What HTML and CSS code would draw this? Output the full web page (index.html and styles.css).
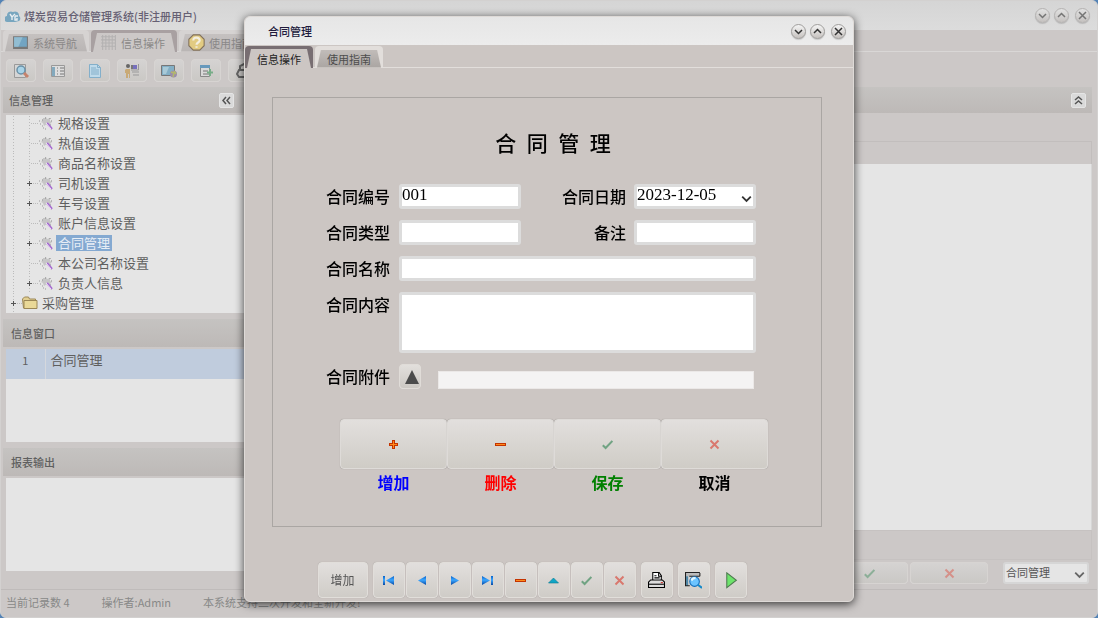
FILE: index.html
```html
<!DOCTYPE html>
<html lang="zh-CN">
<head>
    <meta charset="UTF-8">
    <meta name="viewport" content="width=device-width, initial-scale=1.0">
    <title>煤炭贸易仓储管理系统</title>
    <link rel="stylesheet" href="styles.css">
</head>
<body>
    <!-- Shared icons -->
    <svg class="sprite" aria-hidden="true">
        <defs>
            <linearGradient id="blue" x1="0" y1="0" x2="0" y2="1">
                <stop offset="0" stop-color="#0a62c8"/>
                <stop offset="0.45" stop-color="#3aa6ff"/>
                <stop offset="1" stop-color="#0848a4"/>
            </linearGradient>
            <symbol id="i-down" viewBox="0 0 9 9"><path d="M1 3l3.500 3.500L8 3" fill="none" stroke="currentColor" stroke-width="1.500"/></symbol>
            <symbol id="i-up" viewBox="0 0 9 9"><path d="M1 6l3.500-3.500L8 6" fill="none" stroke="currentColor" stroke-width="1.500"/></symbol>
            <symbol id="i-close" viewBox="0 0 9 9"><path d="M1 1l7 7M8 1l-7 7" fill="none" stroke="currentColor" stroke-width="1.500"/></symbol>
            <symbol id="i-plus" viewBox="0 0 11 11"><path d="M5.500 1v9M1 5.500h9" stroke="#c43400" stroke-width="3"/><path d="M5.500 2v7M2 5.500h7" stroke="#ff8a1c"/></symbol>
            <symbol id="i-minus" viewBox="0 0 11 11"><path d="M0 5.500h11" stroke="#c43400" stroke-width="3"/><path d="M1 5.500h9" stroke="#ff8a1c"/></symbol>
            <symbol id="i-check" viewBox="0 0 11 11"><path d="M.8 6.200l2.800 2.800 6.800-7" fill="none" stroke="#71a383" stroke-width="2"/></symbol>
            <symbol id="i-cross" viewBox="0 0 11 11"><path d="M1.500 1.500l8 8M9.500 1.500l-8 8" fill="none" stroke="#d9786e" stroke-width="2"/></symbol>
            <symbol id="i-first" viewBox="0 0 11 11"><path d="M0 1h2v9H0zM11 1v9L3 5.500z" fill="url(#blue)"/></symbol>
            <symbol id="i-prev" viewBox="0 0 11 11"><path d="M10 1v9L2 5.500z" fill="url(#blue)"/></symbol>
            <symbol id="i-next" viewBox="0 0 11 11"><path d="M2 1v9l8-4.500z" fill="url(#blue)"/></symbol>
            <symbol id="i-last" viewBox="0 0 11 11"><path d="M9 1h2v9H9zM0 1v9l8-4.500z" fill="url(#blue)"/></symbol>
            <symbol id="i-edit" viewBox="0 0 11 11"><path d="M.5 8h10L5.500 3z" fill="#10a5c6" stroke="#067890" stroke-width=".6"/></symbol>
            <symbol id="i-wand" viewBox="0 0 16 16">
                <path d="M5 3h2l1-1 1 2 3-1v3l2 1-2 2v2l-3-2-3 2-1-3-2-1 2-2z" fill="#c6c6c6"/>
                <path d="M7 3h1M12 3v1M13 6h1M12 10h1M4 5h1" stroke="#858585"/>
                <path d="M1 6h1M2 9h1M4 11h1M5 13h1M7 14h1" stroke="#999"/>
                <path d="M9 8l5 6" stroke="#a56ad0" stroke-width="2"/>
                <path d="M8 8l5 6" stroke="#eee3f6"/>
            </symbol>
        </defs>
    </svg>

    <div class="app">
        <header class="titlebar">
            <svg class="logo" viewBox="0 0 16 14"><path d="M3 13a3 3 0 0 1-1-6 4 4 0 0 1 6-4 4 4 0 0 1 6 4 3 3 0 0 1 0 5l-4 1z" fill="#78a6bf"/><path d="M5 5l2 3v3M10 5l-3 3M10 7h3M10 7v4h2V9" fill="none" stroke="#e8eef2" stroke-width="1.400"/></svg>
            <h1>煤炭贸易仓储管理系统(非注册用户)</h1>
            <div class="window-buttons">
                <button aria-label="最小化"><svg><use href="#i-down"/></svg></button>
                <button aria-label="最大化"><svg><use href="#i-up"/></svg></button>
                <button aria-label="关闭" class="close"><svg><use href="#i-close"/></svg></button>
            </div>
        </header>

        <nav class="tabs">
            <button class="tab"><span><svg viewBox="0 0 16 16"><path d="M1 2h14v12H1z" fill="#777"/><path d="M2 3h12v9H2z" fill="#72a4c2"/><path d="M2 3h8l-4 9H2z" fill="#92bdd2"/></svg>系统导航</span></button>
            <button class="tab active"><span><svg viewBox="0 0 16 16"><path d="M2.500 1v14M5.500 1v14M8.500 1v14M11.500 1v14M14.500 1v14M1 2.500h14M1 5.500h14M1 8.500h14M1 11.500h14" stroke="#b4b2b2"/></svg>信息操作</span></button>
            <button class="tab"><span><svg viewBox="0 0 16 16"><path d="M5 .8h6L15.200 5v6L11 15.200H5L.8 11V5z" fill="#e2cb82" stroke="#80705c"/><path d="M5 6c0-4 6-3 6 0 0 2-3 2-3 4M8 11.500v1.500" fill="none" stroke="#f3eee0" stroke-width="2"/></svg>使用指南</span></button>
        </nav>

        <div class="toolbar">
            <button aria-label="查找"><svg viewBox="0 0 16 16"><path d="M1.500 1.500h11v13h-11z" fill="#d5d5d5" stroke="#999"/><circle cx="8" cy="7" r="4" fill="#a8d3e8" stroke="#6a91a8" stroke-width="1.500"/><path d="M11 10l4 4" stroke="#c5826c" stroke-width="3"/></svg></button>
            <button aria-label="列表"><svg viewBox="0 0 16 16"><path d="M1.500 2.500h13v11h-13z" fill="#ddd" stroke="#999"/><path d="M2 4h3v9H2z" fill="#83a9bd"/><path d="M7 5h1M7 8h1M7 11h1M10 5h4M10 8h4M10 11h4" stroke="#777"/></svg></button>
            <button aria-label="文档"><svg viewBox="0 0 16 16"><path d="M2.500 1.500h8l3 3v10h-11z" fill="#bfdaea" stroke="#83afca"/><path d="M10.500 1.500v3h3M4 5h5M4 7h8M4 9h8M4 11h8" fill="none" stroke="#83afca"/></svg></button>
            <button aria-label="用户"><svg viewBox="0 0 16 16"><circle cx="4" cy="3" r="2" fill="#666"/><path d="M2 6h4v9H5v-4H4v4H2v-5H1V7z" fill="#c9aa76"/><path d="M7 2h2v4H7z" fill="#777"/><path d="M9 2h4v4H9z" fill="#7770bd"/><path d="M14.500 1v6H7M8 9h7M9 12h6" fill="none" stroke="#999"/></svg></button>
            <button aria-label="网络"><svg viewBox="0 0 16 16"><path d="M.5 2.500h13v10H.5z" fill="#83afc5" stroke="#777"/><path d="M2 4h6l-3 7H2z" fill="#a8cad8"/><circle cx="12.500" cy="11" r="3.500" fill="#9b8dac"/><path d="M10 9l3 1-1 4M13 8l2 3" stroke="#b3b86c" stroke-width="1.500" fill="none"/></svg></button>
            <button aria-label="新增行"><svg viewBox="0 0 16 16"><path d="M2.500 2.500h9v11h-9z" fill="#d9d9d9" stroke="#888"/><path d="M2 2h10v3H2z" fill="#6799bc"/><path d="M5 8h5M5 11h7" stroke="#777"/><path d="M12 6v7M9 9.500h6" stroke="#78ad88" stroke-width="2"/></svg></button>
            <button aria-label="锁定"><svg viewBox="0 0 16 16"><path d="M5 6V3l4-2 4 3M4 7h9v7H4l-2-3z" fill="none" stroke="#666" stroke-width="2"/></svg></button>
        </div>

        <main class="workspace">
            <aside class="sidebar">
                <div class="panel-title first">
                    <h2>信息管理</h2>
                    <button class="collapse" aria-label="收起"><svg viewBox="0 0 11 11"><path d="M5 2L2 5.500 5 9M9 2L6 5.500 9 9" fill="none" stroke="#555" stroke-width="1.500"/></svg></button>
                </div>
                <div class="tree">
                    <ul>
                        <li><i class="stem"></i><i class="branch"></i><svg><use href="#i-wand"/></svg><span>规格设置</span></li>
                        <li><i class="stem"></i><i class="branch"></i><svg><use href="#i-wand"/></svg><span>热值设置</span></li>
                        <li><i class="stem"></i><i class="branch"></i><svg><use href="#i-wand"/></svg><span>商品名称设置</span></li>
                        <li><i class="stem"></i><i class="branch plus"></i><svg><use href="#i-wand"/></svg><span>司机设置</span></li>
                        <li><i class="stem"></i><i class="branch plus"></i><svg><use href="#i-wand"/></svg><span>车号设置</span></li>
                        <li><i class="stem"></i><i class="branch"></i><svg><use href="#i-wand"/></svg><span>账户信息设置</span></li>
                        <li><i class="stem"></i><i class="branch plus"></i><svg><use href="#i-wand"/></svg><span class="selected">合同管理</span></li>
                        <li><i class="stem"></i><i class="branch"></i><svg><use href="#i-wand"/></svg><span>本公司名称设置</span></li>
                        <li><i class="stem"></i><i class="branch plus"></i><svg><use href="#i-wand"/></svg><span>负责人信息</span></li>
                        <li><i class="branch plus"></i><svg viewBox="0 0 16 16"><path d="M.5 4l2-2h4l1 2h6v9h-12z" fill="#e2cf91" stroke="#9b8756"/><path d="M2 5.500h13v8H2z" fill="#ead998" stroke="#9b8756"/></svg><span>采购管理</span></li>
                    </ul>
                </div>

                <div class="panel-title"><h2>信息窗口</h2></div>
                <div class="box">
                    <table class="open-windows">
                        <tbody>
                            <tr><td class="number">1</td><td>合同管理</td></tr>
                        </tbody>
                    </table>
                </div>

                <div class="panel-title"><h2>报表输出</h2></div>
                <div class="box"></div>
            </aside>

            <section class="content">
                <div class="panel-title first">
                    <button class="collapse" aria-label="折叠"><svg viewBox="0 0 11 11"><path d="M2 5l3.500-3L9 5M2 9l3.500-3L9 9" fill="none" stroke="#555" stroke-width="1.500"/></svg></button>
                </div>
                <div class="grid">
                    <div class="grid-head"></div>
                    <div class="grid-body"></div>
                    <div class="grid-foot"></div>
                </div>
                <div class="content-actions">
                    <button aria-label="保存记录"><svg><use href="#i-check"/></svg></button>
                    <button aria-label="取消修改"><svg><use href="#i-cross"/></svg></button>
                    <div class="select-wrap">
                        <select aria-label="当前表"><option>合同管理</option></select>
                        <svg><use href="#i-down"/></svg>
                    </div>
                </div>
            </section>
        </main>

        <footer class="statusbar">
            <span>当前记录数 4</span>
            <span>操作者:Admin</span>
            <span>本系统支持二次开发和全新开发!</span>
        </footer>
    </div>

    <!-- Contract window -->
    <div class="overlay">
        <div class="dialog" role="dialog" aria-labelledby="dialogTitle">
            <header class="titlebar">
                <h2 id="dialogTitle">合同管理</h2>
                <div class="window-buttons">
                    <button aria-label="最小化"><svg><use href="#i-down"/></svg></button>
                    <button aria-label="最大化"><svg><use href="#i-up"/></svg></button>
                    <button aria-label="关闭" class="close"><svg><use href="#i-close"/></svg></button>
                </div>
            </header>
            <nav class="tabs">
                <button class="tab active"><span>信息操作</span></button>
                <button class="tab"><span>使用指南</span></button>
            </nav>

            <form class="contract">
                <h3>合&ensp;同&ensp;管&ensp;理</h3>
                <div class="fields">
                    <label for="number">合同编号</label>
                    <input id="number" type="text" value="001">
                    <label for="date">合同日期</label>
                    <div class="select-wrap">
                        <select id="date"><option>2023-12-05</option></select>
                        <svg><use href="#i-down"/></svg>
                    </div>
                    <label for="type">合同类型</label>
                    <input id="type" type="text">
                    <label for="remark">备注</label>
                    <input id="remark" type="text">
                    <label for="name">合同名称</label>
                    <input id="name" class="wide" type="text">
                    <label for="body">合同内容</label>
                    <textarea id="body" class="wide"></textarea>
                    <label for="file">合同附件</label>
                    <div class="attachment wide">
                        <button type="button" aria-label="上传附件"><svg viewBox="0 0 14 14"><path d="M0 14L7 0l7 14z" fill="#4b4b4b"/></svg></button>
                        <input id="file" type="text" readonly>
                    </div>
                </div>
                <div class="actions">
                    <div class="action add"><button type="button" aria-labelledby="addText"><svg><use href="#i-plus"/></svg></button><span id="addText">增加</span></div>
                    <div class="action delete"><button type="button" aria-labelledby="deleteText"><svg><use href="#i-minus"/></svg></button><span id="deleteText">删除</span></div>
                    <div class="action save"><button type="button" aria-labelledby="saveText"><svg><use href="#i-check"/></svg></button><span id="saveText">保存</span></div>
                    <div class="action cancel"><button type="button" aria-labelledby="cancelText"><svg><use href="#i-cross"/></svg></button><span id="cancelText">取消</span></div>
                </div>
            </form>

            <div class="navigator">
                <button class="text-button">增加</button>
                <div class="nav-group">
                    <button aria-label="首条"><svg><use href="#i-first"/></svg></button>
                    <button aria-label="上一条"><svg><use href="#i-prev"/></svg></button>
                    <button aria-label="下一条"><svg><use href="#i-next"/></svg></button>
                    <button aria-label="末条"><svg><use href="#i-last"/></svg></button>
                    <button aria-label="删除"><svg><use href="#i-minus"/></svg></button>
                    <button aria-label="编辑"><svg><use href="#i-edit"/></svg></button>
                    <button aria-label="保存"><svg><use href="#i-check"/></svg></button>
                    <button aria-label="取消"><svg><use href="#i-cross"/></svg></button>
                </div>
                <button aria-label="打印"><svg class="large" viewBox="0 0 16 16"><path d="M4.500 8V.5h6l2 3V8" fill="#fff" stroke="#000"/><path d="M10 1v3h3M6 3.500h2M6 5.500h5" fill="none" stroke="#000"/><path d="M.5 9.500l2-2h11l2 2v5H.5z" fill="#ddd" stroke="#000"/><path d="M1 11.500h14" stroke="#000"/><path d="M12 10h2" stroke="#d03028"/></svg></button>
                <button aria-label="预览"><svg class="large" viewBox="0 0 16 16"><path d="M0 1h14v3H0z" fill="#bbb"/><path d="M0 .5h14M4 4h10M14 1v3" fill="none" stroke="#222"/><path d="M2 4v9" stroke="#4e87a8" stroke-width="2"/><path d="M.5 1v12h4" fill="none" stroke="#222"/><circle cx="9" cy="9" r="4.500" fill="#6cc4ff" stroke="#126cba"/><path d="M6 8c1-2 2-3 4-2" stroke="#e2f7ff" stroke-width="2" fill="none"/><path d="M12 12l4 3" stroke="#1689c9" stroke-width="2"/></svg></button>
                <button aria-label="执行"><svg class="large" viewBox="0 0 16 16"><path d="M4.500.8v14l9-7z" fill="#6de46b" stroke="#4f7950"/></svg></button>
            </div>
        </div>
    </div>
</body>
</html>
```

FILE: styles.css
```css
* {
    box-sizing: border-box;
}
body {
    margin: 0;
    background-color: #5483b5;
    font-family: "Noto Sans CJK SC", sans-serif;
    font-size: 11px;
    line-height: 16px;
    color: #5f5f5f;
}
h1, h2, h3, ul {
    margin: 0;
    padding: 0;
}
h1, h2 {
    font-size: 11px;
    font-weight: 500;
}
button, input, select, textarea {
    margin: 0;
    padding: 0;
    font: inherit;
    color: inherit;
}
svg {
    display: block;
    flex: none;
}
.sprite {
    position: absolute;
    width: 0;
    height: 0;
}
/* Main window */
.app {
    display: flex;
    flex-direction: column;
    min-height: 100vh;
    background-color: #ccc8c7;
    border: 1px solid #d3d1d0;
    border-radius: 6px;
    overflow: hidden;
}
.titlebar {
    display: flex;
    align-items: center;
    height: 29px;
    padding: 0 7px 0 4px;
    background-image: linear-gradient(#d5d5d5, #dcdcdc);
    color: #666073;
}
.titlebar .logo {
    width: 16px;
    height: 14px;
    margin-right: 3px;
}
.window-buttons {
    display: flex;
    gap: 4px;
    margin-left: auto;
}
.window-buttons button {
    display: flex;
    align-items: center;
    justify-content: center;
    width: 15px;
    height: 15px;
    border: 1px solid #b4b2b1;
    border-radius: 50%;
    background-image: linear-gradient(#e2e2e2, #c5c2c0);
    box-shadow: 0 1px 1px rgba(0, 0, 0, 0.15);
    color: #757575;
}
.window-buttons .close {
    margin-left: 2px;
}
.window-buttons svg {
    width: 9px;
    height: 9px;
}
/* Tabs */
.tabs {
    display: flex;
    gap: 2px;
    height: 22px;
    padding-left: 2px;
    border-bottom: 1px solid #d9d7d6;
}
.tab {
    height: 22px;
    padding: 3px 2px 0;
    border: 0;
    border-radius: 4px 4px 0 0;
    background-color: #d6d3d2;
    color: #8a8888;
}
.tab span {
    display: flex;
    align-items: center;
    gap: 4px;
    height: 18px;
    padding: 0 10px 0 7px;
    background-image: linear-gradient(#c5c1c0, #b9b5b4);
    clip-path: polygon(4px 0, calc(100% - 4px) 0, 100% 100%, 0 100%);
}
.tab svg {
    width: 17px;
    height: 17px;
}
.tab.active {
    background-color: #a8a0a1;
}
.tab.active span {
    height: 19px;
    background: #ccc8c7;
}
/* Toolbar */
.toolbar {
    display: flex;
    align-items: center;
    gap: 7px;
    height: 35px;
    padding: 2px 5px 0;
}
.toolbar button, .content-actions button, .navigator button, .action button, .attachment button {
    display: flex;
    align-items: center;
    justify-content: center;
    border: 1px solid #d7d4d2;
    border-radius: 4px;
    background-image: linear-gradient(#d5d3d2, #cac8c5);
}
.toolbar button {
    width: 30px;
    height: 23px;
}
.toolbar svg {
    width: 16px;
    height: 16px;
}
/* Workspace */
.workspace {
    display: flex;
    flex: 1;
}
.sidebar {
    display: flex;
    flex-direction: column;
    width: 243px;
    padding: 0 0 18px 5px;
}
.panel-title {
    display: flex;
    align-items: center;
    height: 28px;
    margin: 6px 0 2px -3px;
    padding: 0 8px;
    background-image: linear-gradient(#c5c3c1, #bdb9b7);
}
.panel-title.first {
    height: 26px;
    margin: 0 0 2px -3px;
    padding: 0 6px;
}
.collapse {
    display: flex;
    align-items: center;
    justify-content: center;
    width: 15px;
    height: 15px;
    margin-left: auto;
    border: 1px solid #e5e5e5;
    border-radius: 2px;
    background-color: #dadada;
}
.collapse svg {
    width: 11px;
    height: 11px;
}
.sidebar .collapse {
    margin-right: 4px;
}
.tree, .box {
    flex: 8 1 0;
    background-color: #e5e5e5;
    overflow: hidden;
}
.tree {
    flex-grow: 17;
    min-height: 198px;
}
.tree ul {
    margin-top: -2px;
    list-style: none;
}
.tree li {
    display: flex;
    align-items: center;
    height: 20px;
    font-size: 13px;
    line-height: 16px;
}
.tree svg {
    width: 16px;
    height: 16px;
}
.tree span {
    margin-left: 2px;
    padding: 0 2px;
}
.tree .selected {
    background-color: #84a9d1;
    color: #e8eef6;
}
.stem, .branch {
    position: relative;
    width: 16px;
    height: 20px;
    background: repeating-linear-gradient(#bbb 0 1px, transparent 1px 3px) 7px 0 / 1px 100% no-repeat;
}
.branch::before {
    content: "";
    position: absolute;
    top: 10px;
    right: 0;
    width: 7px;
    border-top: 1px dotted #bbb;
}
.plus::after {
    content: "";
    position: absolute;
    top: 8px;
    left: 5px;
    width: 5px;
    height: 5px;
    background: linear-gradient(#555, #555) center / 5px 1px no-repeat, linear-gradient(#555, #555) center / 1px 5px no-repeat, #e5e5e5;
}
.open-windows {
    width: 100%;
    border-collapse: collapse;
    background-color: #c0ccdd;
}
.open-windows td {
    height: 30px;
    padding: 0 5px 8px;
    font-size: 13px;
    line-height: 20px;
}
.open-windows .number {
    width: 39px;
    border-right: 1px solid #d5d8dd;
    font-size: 11px;
    text-align: center;
}
.content {
    display: flex;
    flex: 1;
    flex-direction: column;
    margin-left: 6px;
    padding-right: 5px;
}
.grid {
    display: flex;
    flex: 1;
    flex-direction: column;
    margin-top: 26px;
}
.grid-head {
    height: 23px;
    border: 1px solid #c2bebd;
    border-bottom: 0;
}
.grid-body {
    flex: 1;
    background-color: #e5e5e5;
    border-right: 1px solid #d6d6d6;
}
.grid-foot {
    height: 30px;
    border: 1px solid #c6c2c1;
}
.content-actions {
    display: flex;
    justify-content: flex-end;
    gap: 2px;
    height: 29px;
    padding: 2px 3px 5px;
}
.content-actions button {
    width: 78px;
}
.content-actions button svg {
    width: 11px;
    height: 11px;
    opacity: 0.7;
}
.content-actions .select-wrap {
    width: 86px;
    margin-left: 13px;
}
.select-wrap {
    position: relative;
}
.select-wrap select {
    width: 100%;
    height: 22px;
    padding: 0 16px 2px 1px;
    appearance: none;
    border: 2px solid #d6d6d6;
    border-radius: 3px;
    background-color: #e5e5e5;
    color: #555;
}
.select-wrap svg {
    position: absolute;
    right: 4px;
    bottom: 4px;
    width: 11px;
    height: 11px;
    color: #666;
    pointer-events: none;
}
.statusbar {
    display: flex;
    gap: 32px;
    height: 28px;
    padding: 4px 5px;
    border-top: 1px solid #bfbbba;
    color: #888;
}
/* Dialog */
.overlay {
    position: fixed;
    inset: 0;
    display: flex;
    align-items: center;
    justify-content: center;
}
.dialog {
    width: 610px;
    max-width: 96%;
    border: 1px solid #dedad7;
    border-radius: 6px;
    background-color: #ccc6c3;
    box-shadow: 0 2px 10px rgba(0, 0, 0, 0.75);
    overflow: hidden;
}
.dialog .titlebar {
    height: 28px;
    padding: 0 7px 0 23px;
    background-image: linear-gradient(#e6e6e6, #ececec);
    color: #201a3c;
}
.dialog .window-buttons button {
    border-color: #a09e9c;
    background-image: linear-gradient(#f4f4f4, #c6c2bf);
    color: #333;
}
.dialog .tabs {
    height: 23px;
    padding: 1px 0 0;
    border-color: #e2dedb;
}
.dialog .tab {
    background-color: #e2dedb;
    color: #4d4d4d;
}
.dialog .tab span {
    background-image: linear-gradient(#c1bcb9, #aaa5a2);
    padding: 0 10px;
}
.dialog .tab.active {
    background-color: #786e72;
    color: #222;
}
.dialog .tab.active span {
    background: #ccc6c3;
}
/* Contract form */
.contract {
    margin: 29px 31px 35px 27px;
    padding: 32px 53px 31px;
    border: 1px solid #aaa6a3;
    color: #000;
}
.contract h3 {
    padding-left: 12px;
    font-size: 21px;
    font-weight: 500;
    line-height: 24px;
    text-align: center;
}
.fields {
    display: grid;
    grid-template-columns: 65px 122px 1fr 122px;
    gap: 11px 8px;
    margin: 30px 12px 30px 0;
}
.fields label {
    font-size: 16px;
    line-height: 24px;
    font-weight: 500;
    white-space: nowrap;
}
.fields label[for="date"], .fields label[for="remark"] {
    text-align: right;
}
.fields input, .fields textarea, .fields select {
    width: 100%;
    height: 25px;
    padding: 0 0 4px;
    border: 3px solid #dcdcdc;
    border-radius: 3px;
    background-color: #fff;
    font-family: "Liberation Serif", serif;
    font-size: 17px;
    line-height: 16px;
    color: #000;
}
.fields .select-wrap svg {
    bottom: 5px;
    color: #333;
}
.fields .wide {
    grid-column: 2 / -1;
}
.fields textarea {
    display: block;
    height: 61px;
    resize: none;
}
.attachment {
    display: flex;
    align-items: flex-end;
    gap: 17px;
    height: 25px;
    padding-right: 2px;
}
.attachment button {
    flex: none;
    width: 22px;
    height: 25px;
    padding-left: 4px;
    border-color: #e0dcd8;
    background-image: linear-gradient(#e2dfdc, #ccc8c3);
}
.attachment button svg {
    width: 14px;
    height: 14px;
}
.fields .attachment input {
    height: 18px;
    border: 1px solid #ebe8e7;
    border-radius: 0;
    background-color: #f4f3f3;
}
.actions {
    display: flex;
    margin-left: 14px;
}
.action {
    flex: 1;
    font-size: 16px;
    font-weight: 700;
    line-height: 26px;
    text-align: center;
}
.action button {
    width: 100%;
    height: 50px;
    border-color: #dedbd8;
    background-image: linear-gradient(#e2dfdd, #cfccc6);
    box-shadow: 0 0 1px #9b9794;
}
.action svg, .navigator svg {
    width: 11px;
    height: 11px;
}
.add {
    color: #00f;
}
.delete {
    color: #f00;
}
.save {
    color: #008000;
}
/* Record navigator */
.navigator {
    display: flex;
    justify-content: center;
    gap: 5px;
    padding: 0 66px 3px 32px;
}
.navigator button {
    width: 32px;
    height: 36px;
    border-color: #e1deda;
    background-image: linear-gradient(#e2dfdd, #cfccc7);
    box-shadow: 0 0 1px #aaa6a3;
}
.navigator .text-button {
    width: 50px;
    font-size: 12px;
    color: #555;
}
.navigator .large {
    width: 17px;
    height: 17px;
}
.nav-group {
    display: flex;
    gap: 1px;
}
```
